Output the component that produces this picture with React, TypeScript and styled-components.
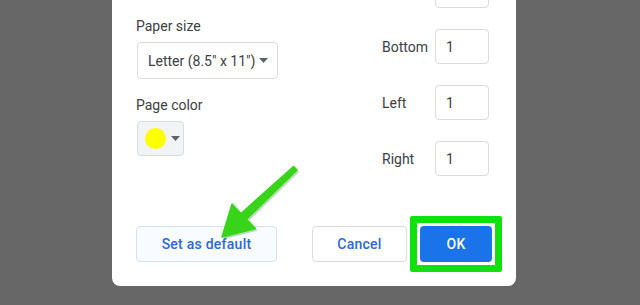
import styled, { createGlobalStyle } from "styled-components";

const GlobalStyle = createGlobalStyle`
  html, body {
    margin: 0;
    padding: 0;
    background: #676767;
    overflow: hidden;
  }
  body {
    font-family: Roboto, "Liberation Sans", sans-serif;
    width: 640px;
    height: 305px;
  }
`;

function Caret() {
  return (
    <svg width="9" height="5" viewBox="0 0 9 5">
      <path d="M0 0 L9 0 L4.5 5 Z" fill="#5f6368" />
    </svg>
  );
}

function MarginRow({ label, value }: { label?: string; value?: string }) {
  return (
    <Row>
      <RowLabel>{label}</RowLabel>
      <NumberBox>{value}</NumberBox>
    </Row>
  );
}

const ARROW =
  "297,170 293.5,166.5 241,213.5 232,204 222,237 255.5,228.5 246.5,219.3";

export default function App() {
  return (
    <>
      <GlobalStyle />
      <Page>
        <Dialog>
          <Body>
            <LeftColumn>
              <Label>Paper size</Label>
              <Select>
                <span>Letter (8.5" x 11")</span>
                <Caret />
              </Select>
              <Label $top={16}>Page color</Label>
              <ColorButton>
                <Swatch $color="#ffff00" />
                <Caret />
              </ColorButton>
            </LeftColumn>
            <RightColumn>
              {/* top margin row sits above the visible area */}
              <MarginRow />
              <MarginRow label="Bottom" value="1" />
              <MarginRow label="Left" value="1" />
              <MarginRow label="Right" value="1" />
            </RightColumn>
          </Body>
          <Footer>
            <DefaultButton>Set as default</DefaultButton>
            <Actions>
              <CancelButton>Cancel</CancelButton>
              <Highlight>
                <OkButton>OK</OkButton>
              </Highlight>
            </Actions>
          </Footer>
        </Dialog>
        <Pointer width="640" height="305" viewBox="0 0 640 305">
          <polygon
            points={ARROW}
            fill="#1c8a10"
            opacity="0.3"
            transform="translate(2,2)"
          />
          <polygon
            points={ARROW}
            fill="#38d41a"
            strokeLinejoin="round"
            stroke="#38d41a"
            strokeWidth="1.5"
          />
        </Pointer>
      </Page>
    </>
  );
}

const Page = styled.div`
  position: relative;
  width: 640px;
  height: 305px;
  overflow: hidden;
`;

const Dialog = styled.div`
  margin: -27px 0 0 112px;
  width: 404px;
  box-sizing: border-box;
  padding: 0 24px 24px;
  background: #ffffff;
  border-radius: 0 0 8px 8px;
`;

const Body = styled.div`
  display: flex;
  justify-content: space-between;
  align-items: flex-start;
`;

const LeftColumn = styled.div`
  display: flex;
  flex-direction: column;
  align-items: flex-start;
  padding-top: 43px;
`;

const Label = styled.div<{ $top?: number }>`
  margin-top: ${(p) => p.$top ?? 0}px;
  margin-bottom: 6px;
  font-size: 14px;
  line-height: 20px;
  color: #3c4043;
`;

const Select = styled.div`
  display: flex;
  align-items: center;
  justify-content: space-between;
  box-sizing: border-box;
  width: 141px;
  height: 37px;
  margin-left: 1px;
  padding: 0 9px 0 10px;
  border: 1px solid #dadce0;
  border-radius: 4px;
  font-size: 14px;
  color: #3c4043;
`;

const ColorButton = styled.div`
  display: flex;
  align-items: center;
  gap: 5px;
  box-sizing: border-box;
  width: 47px;
  height: 35px;
  margin-left: 1px;
  padding-left: 7px;
  background: #f1f3f4;
  border: 1px solid #dadce0;
  border-radius: 4px;
`;

const Swatch = styled.span<{ $color: string }>`
  width: 21px;
  height: 21px;
  border-radius: 50%;
  background: ${(p) => p.$color};
`;

const RightColumn = styled.div`
  display: flex;
  flex-direction: column;
  gap: 21px;
  margin-right: 3px;
`;

const Row = styled.div`
  display: flex;
  align-items: center;
`;

const RowLabel = styled.span`
  width: 53px;
  font-size: 14px;
  color: #3c4043;
`;

const NumberBox = styled.div`
  box-sizing: border-box;
  width: 54px;
  height: 35px;
  padding-left: 10px;
  display: flex;
  align-items: center;
  border: 1px solid #dadce0;
  border-radius: 4px;
  font-size: 14px;
  color: #3c4043;
`;

const Footer = styled.div`
  display: flex;
  justify-content: space-between;
  align-items: center;
  margin-top: 50px;
`;

const Actions = styled.div`
  display: flex;
  align-items: center;
  gap: 3px;
`;

const BaseButton = styled.div`
  box-sizing: border-box;
  height: 36px;
  display: flex;
  align-items: center;
  justify-content: center;
  border-radius: 4px;
  font-size: 14px;
  font-weight: 500;
  letter-spacing: 0.25px;
`;

const DefaultButton = styled(BaseButton)`
  width: 141px;
  background: #f8fbff;
  border: 1px solid #d6e2f0;
  color: #2a6ad6;
`;

const CancelButton = styled(BaseButton)`
  width: 95px;
  background: #ffffff;
  border: 1px solid #dadce0;
  color: #2a6ad6;
`;

const Highlight = styled.div`
  margin: -10px -10px -10px 0;
  padding: 3px;
  background: #ffffff;
  border: 7px solid #0ee10e;
  border-radius: 2px;
`;

const OkButton = styled(BaseButton)`
  width: 72px;
  background: #1a73e8;
  color: #ffffff;
`;

const Pointer = styled.svg`
  position: absolute;
  left: 0;
  top: 0;
  pointer-events: none;
`;
